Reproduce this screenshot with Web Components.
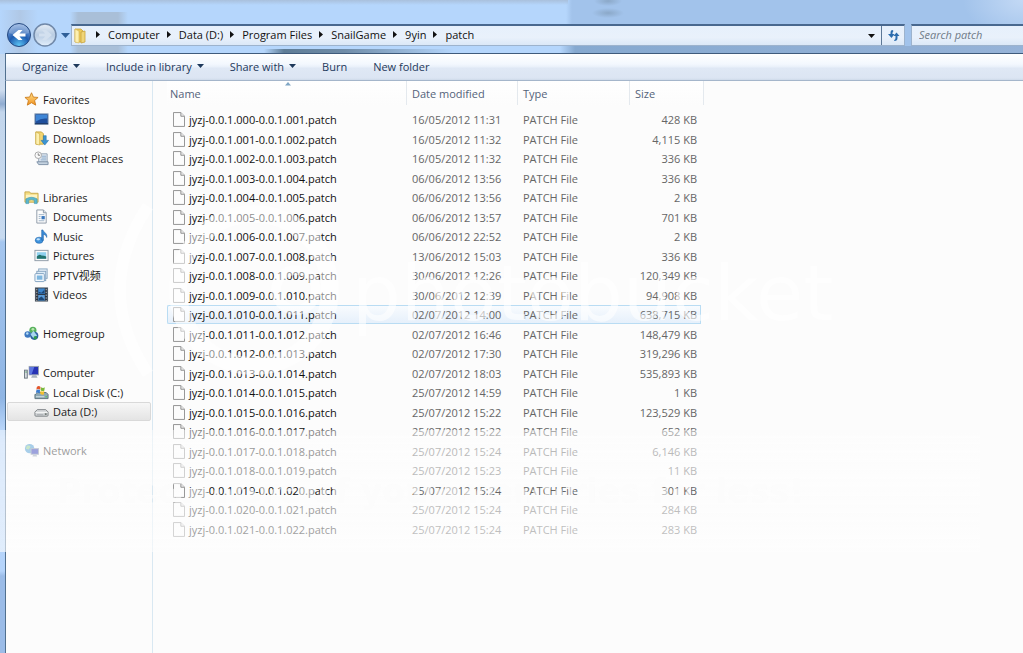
<!DOCTYPE html>
<html lang="en">
<head>
<meta charset="utf-8">
<title>patch</title>
<style>
html, body { height: 100%; }
body { margin: 0; overflow: hidden; font: 11px/19px "Open Sans", "Noto Sans", "Noto Sans CJK SC", sans-serif; color: #1b1b1b; }
</style>
</head>
<body>
<explorer-window>
  <address-bar slot="address" path="Computer|Data (D:)|Program Files|SnailGame|9yin|patch"></address-bar>
  <command-bar slot="commands">
    <command-button menu>Organize</command-button>
    <command-button menu>Include in library</command-button>
    <command-button menu>Share with</command-button>
    <command-button>Burn</command-button>
    <command-button>New folder</command-button>
  </command-bar>
  <nav-pane slot="nav">
    <nav-item icon="star" root>Favorites</nav-item>
    <nav-item icon="desktop">Desktop</nav-item>
    <nav-item icon="downloads">Downloads</nav-item>
    <nav-item icon="recent">Recent Places</nav-item>
    <nav-gap></nav-gap>
    <nav-item icon="libraries" root>Libraries</nav-item>
    <nav-item icon="documents">Documents</nav-item>
    <nav-item icon="music">Music</nav-item>
    <nav-item icon="pictures">Pictures</nav-item>
    <nav-item icon="pptv">PPTV视频</nav-item>
    <nav-item icon="videos">Videos</nav-item>
    <nav-gap></nav-gap>
    <nav-item icon="homegroup" root>Homegroup</nav-item>
    <nav-gap></nav-gap>
    <nav-item icon="computer" root>Computer</nav-item>
    <nav-item icon="localdisk">Local Disk (C:)</nav-item>
    <nav-item icon="drive" selected>Data (D:)</nav-item>
    <nav-gap></nav-gap>
    <nav-item icon="network" root>Network</nav-item>
  </nav-pane>
  <file-list slot="files"></file-list>
</explorer-window>
<photo-watermark></photo-watermark>

<script>
const ICONS = {
  star: '<defs><linearGradient id="g" x2="0" y2="1"><stop stop-color="#ffe28a"/><stop offset="1" stop-color="#f2911f"/></linearGradient></defs><path d="M8 .8l2 4.600 5 .4-3.700 3.300 1.200 4.900L8 11.400 3.500 14l1.200-4.900L1 5.800l5-.4z" fill="url(#g)" stroke="#c9791a" stroke-width=".9"/>',
  desktop: '<rect x="1" y="2" width="14" height="11" fill="#1f4f9c" stroke="#7d93ad"/><path d="M2 3h12v4Q8 6 2 10z" fill="#3f86d6"/><path d="M1 12.500h14" stroke="#16305c"/>',
  downloads: '<path d="M2 1h6l2 2v11H2z" fill="#f3d774" stroke="#c8a63e"/><path d="M2 1l4 2v12l-4-1z" fill="#fdf0b0" stroke="#c8a63e" stroke-width=".6"/><path d="M10 5h3v5h2.500L11.500 15 7.500 10H10z" fill="#3b94d2" stroke="#2471a8" stroke-width=".6"/>',
  recent: '<path d="M5 3h9v9H5z" fill="#e6edf4" stroke="#8fa0b3"/><path d="M3 11.500h12v3H5z" fill="#c5d3e0" stroke="#7c8fa5"/><path d="M8 5.500h5M8 7.500h5M7 9.500h6" stroke="#7fa0c4"/><circle cx="4.500" cy="4.500" r="3.500" fill="#fbfbfb" stroke="#a5a5a5"/><path d="M4.500 2.500v2h2" stroke="#777" fill="none"/>',
  libraries: '<path d="M1 2h5l1 1.500h8V13H1z" fill="#f3dc82" stroke="#c9a94a"/><path d="M2 5h12v4H2z" fill="#fdf3c0"/><path d="M2 14.500V9.500Q8 6 14 9.500v5h-3V11Q8 9.500 5 11v3.500z" fill="#59b7cf" stroke="#3a93ab" stroke-width=".6"/>',
  documents: '<path d="M3 1h7l3 3v11H3z" fill="#fcfcfc" stroke="#8d99a6"/><path d="M10 1v3h3" fill="#dce4ec" stroke="#8d99a6"/><path d="M5 6h6M5 8h2M5 10h2M5 12.500h6" stroke="#9fb3c8"/><path d="M8 7.500h3.500v3.500H8z" fill="#3c78bd"/>',
  music: '<ellipse cx="5.500" cy="12" rx="4.200" ry="3.300" fill="#3f93dd" stroke="#1e62a8" stroke-width=".6"/><path d="M8.200 12V1h1.300c1 3 5 3.500 4 8-.5-2-1.500-3-3.500-3.200V12z" fill="#3a8ad6" stroke="#1e62a8" stroke-width=".6"/><ellipse cx="4.500" cy="11" rx="1.900" ry="1.200" fill="#bfe0fa"/>',
  pictures: '<rect x="1" y="2.500" width="14" height="11" fill="#fafafa" stroke="#8e9aa7"/><rect x="3" y="4.500" width="10" height="7" fill="#8fd0ee"/><path d="M3 9q3-3 5-1 3 0 5 1v2.500H3z" fill="#22736e"/>',
  pptv: '<rect x="5" y="1" width="9" height="10" fill="#e8f1f9" stroke="#86a4c0"/><rect x="3" y="3.500" width="9.500" height="10" fill="#dcebf7" stroke="#86a4c0"/><rect x="1" y="6" width="10" height="8.500" rx="1" fill="#f4f9fd" stroke="#7d9fbf"/><rect x="3" y="8" width="6" height="4.500" fill="#7db6df"/>',
  videos: '<rect x="1.500" y="1" width="13" height="14" fill="#2b3440" stroke="#49535e"/><rect x="4.500" y="1.500" width="7" height="6" fill="#3e86cc"/><rect x="4.500" y="8.500" width="7" height="6" fill="#5a9bd8"/><path d="M5 5l3 1 3-3v4H5zM5 12l3-2 3 3v1H5z" fill="#1d4776"/><path d="M3 2v13M13 2v13" stroke="#c9c9c9" stroke-dasharray="1.500 1.500"/>',
  homegroup: '<circle cx="9.500" cy="4.500" r="3.800" fill="#58b15d"/><circle cx="4" cy="9" r="3.500" fill="#3d78c0"/><circle cx="11" cy="10.500" r="4.300" fill="#2d5f9f"/><path d="M7 9l3-4 4 5-4 3z" fill="#a7d7ee"/><circle cx="9.500" cy="3.500" r="1.500" fill="#b9e6b0"/><circle cx="12" cy="12.500" r="1.800" fill="#2f9a4c"/><circle cx="3.500" cy="8" r="1.300" fill="#b7dcf5"/>',
  computer: '<rect x="5.500" y="1.500" width="10" height="9" fill="#2733b5" stroke="#9aa4b0"/><path d="M6 2h5L8 10H6z" fill="#5c75e0"/><path d="M9 11h4l1.500 2.500h-7z" fill="#a9b3be"/><rect x=".5" y="5.500" width="3" height="8.500" fill="#d6dbe0" stroke="#6d7781"/><path d="M1.500 7.500h1.500" stroke="#3e9b52"/>',
  localdisk: '<path d="M2 10l2-2h9l2 2v4.500H1V10z" fill="#8fa9b4" stroke="#5b727c"/><path d="M2 12.500h9" stroke="#d4e2e8"/><circle cx="13" cy="12.500" r=".8" fill="#50d050"/><path d="M3 2q2-2 4 0L6.500 5Q4.500 3.500 2.500 5z" fill="#e4572b"/><path d="M7.500 2.300q2 1.500 4 .2L11 6q-2 1-4-.5z" fill="#7ab83a"/><path d="M2.500 5.500q2-1.300 4 0L6 9Q4 7.500 2 8.500z" fill="#3b7dd0"/><path d="M7 6q2 1.500 4 .5L10.500 10q-2 .8-4-.7z" fill="#f3c02f"/>',
  drive: '<path d="M1 8.500L3.500 6h9L15 8.500v3.500q0 1-1 1H2q-1 0-1-1z" fill="#d5d8da" stroke="#7d8285"/><path d="M1.500 9h13" stroke="#f6f6f6"/><path d="M3 11.500h7" stroke="#9ea3a6"/><rect x="11.500" y="10" width="2" height="1.500" fill="#58615c"/>',
  network: '<circle cx="6" cy="6" r="5" fill="#3f93d0"/><path d="M3 3q3-1 4 1L5 7 2 6zM7 8l3-1-1 3z" fill="#8ccf8d"/><rect x="7.500" y="6" width="8" height="6" fill="#2733b5" stroke="#8490a5"/><path d="M10 12h3l1 2.500h-5z" fill="#98a3b5"/>'
};
const svg = (body, w = 16, h = 16, vb = '0 0 16 16') =>
  `<svg width="${w}" height="${h}" viewBox="${vb}" fill="none" aria-hidden="true">${body}</svg>`;

class Base extends HTMLElement {
  connectedCallback() {
    if (this.shadowRoot) return;
    this.attachShadow({ mode: 'open' }).innerHTML = this.render();
  }
}

customElements.define('explorer-window', class extends Base {
  render() { return `<style>
    :host { display: grid; grid-template-rows: 53px 28px 1fr; min-height: 100vh; box-sizing: border-box; padding-left: 5px;
      background:
        radial-gradient(ellipse at 100% 0, #c3d9f5 0, transparent 60px) no-repeat,
        linear-gradient(#a9c0dc 0, transparent 5px) 0 0 / 568px 6px no-repeat,
        linear-gradient(90deg, transparent, #a9bfd8 8px, #a9bfd8 48px, transparent) 70px 12px / 58px 42px no-repeat,
        linear-gradient(90deg, transparent, #b0c8e6 20px, transparent) 0 10px / 38px 44px no-repeat,
        linear-gradient(90deg, transparent, #5f7d97 20px, #6f8ca8 80px, transparent) 264px 49px / 190px 4px no-repeat,
        radial-gradient(closest-side, #8ba8c8, transparent) 592px 8px / 32px 10px no-repeat,
        radial-gradient(closest-side, #8ba8c8, transparent) 594px -4px / 28px 10px no-repeat,
        linear-gradient(90deg, #b5d6fc 566px, #a2c3eb 572px) 0 0 / 100% 46px no-repeat,
        linear-gradient(90deg, #b5d6fc 560px, #86a9d0 575px, #96b3d8) 0 46px / 100% 8px no-repeat,
        linear-gradient(#c4d8ef 54px, #cfddef 90px, #8fabd0 104px, #c3d6ec 112px, #c7daf0 238px, #a5c6ef 242px, #8fb5e4 398px, #b9d6fa 430px, #b5d4fb 571px, #9bbce8 576px); }
    .top { display: grid; align-items: end; padding-bottom: 7px; min-width: 0; }
    .bar, .body { border-left: 1px solid #51708f; min-width: 0; }
    .bar { border-top: 1px solid #3f5b7c; border-bottom: 1px solid #a5b6cb; display: grid;
      background: linear-gradient(#fff 0, #f3f8fe 10px, #e9f0fa 13px, #dfe8f5 14px, #dce5f3 24px, #cfdaea); }
    .body { display: grid; grid-template-columns: 147px minmax(0, 1fr); background: #fcfcfc; }
  </style>
  <div class="top"><slot name="address"></slot></div>
  <div class="bar"><slot name="commands"></slot></div>
  <div class="body"><slot name="nav"></slot><slot name="files"></slot></div>`; }
});

customElements.define('address-bar', class extends Base {
  render() {
    const arrow = svg('<path d="M0 0l4 3.500L0 7z" fill="#111"/>', 4, 7, '0 0 4 7');
    const crumbs = this.getAttribute('path').split('|')
      .map(t => `<li>${arrow}<a href="#">${t}</a></li>`).join('');
    return `<style>
    :host { display: flex; align-items: center; height: 22px; }
    button { appearance: none; border: 0; background: none; padding: 0; margin: 0; font: inherit; display: grid; place-items: center; }
    .travel { display: flex; align-items: center; box-sizing: border-box; width: 66px; height: 22px; padding-left: 1px; }
    .travel svg { display: block; flex: none; }
    .recent { width: 12px; height: 22px; }
    .field { box-sizing: border-box; height: 22px; background: linear-gradient(#e6f0fc, #e9f1fb 60%, #dbe8f7); border: 1px solid #9db3cd; border-top: 2px solid #48688f; display: flex; align-items: center; }
    .path { flex: 1; min-width: 0; padding-left: 1px; }
    ol { list-style: none; margin: 0 auto 0 0; padding: 0; display: flex; }
    li { display: flex; align-items: center; gap: 8px; padding-left: 7px; white-space: nowrap; line-height: 17px; padding-bottom: 2px; }
    a { color: #111; text-decoration: none; }
    .drop { width: 19px; height: 19px; }
    .refresh { width: 23px; height: 19px; border-left: 1px solid #5c7796; }
    search { display: block; width: 112px; margin-left: 6px; }
    search .field { border-right: 0; }
    input { width: 100%; box-sizing: border-box; border: 0; outline: 0; background: none; padding: 0 0 2px 7px; height: 18px; font: italic 11px/16px "Open Sans", sans-serif; }
    input::placeholder { color: #707b88; opacity: 1; }
  </style>
  <div class="travel">
    <button aria-label="Back">${svg('<defs><radialGradient id="b" cx=".5" cy=".95" r=".9"><stop stop-color="#5cc5f5"/><stop offset=".5" stop-color="#1f5cb0"/><stop offset="1" stop-color="#86a9dc"/></radialGradient></defs><circle cx="13" cy="12" r="11.500" fill="url(#b)" stroke="#274a80"/><path d="M3 10a10 9 0 0 1 20 0q-10 4-20 0z" fill="#fff" opacity=".22"/><path d="M19.500 10.500h-6l3-3.500h-4l-6 5 6 5h4l-3-3.500h6z" fill="#fff"/>', 27, 24, '0 0 27 24')}</button>
    <button aria-label="Forward">${svg('<defs><linearGradient id="f" x2="0" y2="1"><stop stop-color="#e6eef7"/><stop offset=".5" stop-color="#b9cce2"/><stop offset="1" stop-color="#e2effc"/></linearGradient></defs><circle cx="12" cy="12" r="11" fill="url(#f)" stroke="#7088a8" stroke-width="1.500"/><path d="M6 10.500h6L9 7h4l6 5-6 5H9l3-3.500H6z" fill="#d3e0ef"/>', 26, 24, '0 0 26 24')}</button>
    <button class="recent" aria-label="Recent pages">${svg('<path d="M0 0h9L4.500 5z" fill="#2f5f98"/>', 9, 5, '0 0 9 5')}</button>
  </div>
  <div class="field path">
    ${svg('<path d="M2 1h6l2 2v11H2z" fill="#ecc95a" stroke="#c9a440" stroke-width=".8"/><path d="M8 4l4-1v11l-4 1z" fill="#f0d578" stroke="#c9a440" stroke-width=".8"/><path d="M2 1l4 2v12l-4-1z" fill="#fdf0b0" stroke="#d4b452" stroke-width=".6"/>')}
    <ol>${crumbs}</ol>
    <button class="drop" aria-label="Previous locations">${svg('<path d="M0 0h7L3.500 4z" fill="#111"/>', 7, 4, '0 0 7 4')}</button>
    <button class="refresh" aria-label="Refresh">${svg('<path d="M6 2Q4 2 4 5v1H1.500L5 10l3-4H6V5q0-1 1-2zM8 13q3 0 3-3V8h2L10 4.500 7 8h2v2q0 2-1.500 2z" fill="#2b6cae"/>', 15, 15, '0 0 14 15')}</button>
  </div>
  <search><div class="field"><input type="search" placeholder="Search patch" aria-label="Search patch"></div></search>`; }
});

customElements.define('command-bar', class extends Base {
  render() { return `<style>
    :host { display: flex; align-items: center; gap: 26px; padding: 0 0 2px 16px; }
  </style><slot></slot>`; }
});

customElements.define('command-button', class extends Base {
  render() { return `<style>
    :host { display: block; }
    button { appearance: none; border: 0; background: none; padding: 0; font: inherit; color: #1e395b; display: flex; align-items: center; gap: 5px; white-space: nowrap; }
  </style><button><slot></slot>${this.hasAttribute('menu') ? svg('<path d="M0 0h7L3.500 4z" fill="#1e395b"/>', 7, 4, '0 0 7 4') : ''}</button>`; }
});

customElements.define('nav-pane', class extends Base {
  render() { return `<style>
    :host { display: grid; grid-auto-rows: 19px 20px; align-content: start; padding-top: 9px; border-right: 1px solid #d9e8f2; background: #fcfcfc; }
  </style><slot></slot>`; }
});
customElements.define('nav-gap', class extends Base {
  render() { return '<style>:host { display: block; }</style>'; }
});

customElements.define('nav-item', class extends Base {
  render() { return `<style>
    :host { display: block; padding: 0 1px; }
    a { display: flex; align-items: center; gap: 4px; height: 100%; box-sizing: border-box; padding-left: 26px; color: inherit; text-decoration: none; white-space: nowrap; border: 1px solid transparent; border-radius: 2px; }
    :host([root]) a { padding-left: 16px; }
    svg { width: 15px; height: 15px; flex: none; }
    :host([selected]) a { border-color: #d9d9d9; background: linear-gradient(#f7f7f7, #e4e4e4); }
  </style><a href="#">${svg(ICONS[this.getAttribute('icon')])}<span><slot></slot></span></a>`; }
});

const FILES = [
  ['16/05/2012 11:31', '428'], ['16/05/2012 11:32', '4,115'], ['16/05/2012 11:32', '336'],
  ['06/06/2012 13:56', '336'], ['06/06/2012 13:56', '2'], ['06/06/2012 13:57', '701'],
  ['06/06/2012 22:52', '2'], ['13/06/2012 15:03', '336'], ['30/06/2012 12:26', '120,349'],
  ['30/06/2012 12:39', '94,908'], ['02/07/2012 14:00', '638,715'], ['02/07/2012 16:46', '148,479'],
  ['02/07/2012 17:30', '319,296'], ['02/07/2012 18:03', '535,893'], ['25/07/2012 14:59', '1'],
  ['25/07/2012 15:22', '123,529'], ['25/07/2012 15:22', '652'], ['25/07/2012 15:24', '6,146'],
  ['25/07/2012 15:23', '11'], ['25/07/2012 15:24', '301'], ['25/07/2012 15:24', '284'],
  ['25/07/2012 15:24', '283']
];

customElements.define('file-list', class extends Base {
  render() {
    const n = i => String(i).padStart(3, '0');
    const page = svg('<path d="M.5.500h8l4 4v11H.5z" fill="#fcfcfc" stroke="#8c8c8c"/><path d="M8.500.500v4h4" stroke="#8c8c8c" fill="#e9e9e9"/>', 12, 15, '0 0 13 16');
    const rows = FILES.map(([date, kb], i) => `<tr${i === 10 ? ' class="hot"' : ''}>
      <td><span class="name">${page}<span>jyzj-0.0.1.${n(i)}-0.0.1.${n(i + 1)}.patch</span></span></td>
      <td>${date}</td><td>PATCH File</td><td>${kb} KB</td></tr>`).join('');
    return `<style>
    :host { display: block; padding-left: 14px; }
    table { border-collapse: separate; border-spacing: 0; table-layout: fixed; width: 537px; }
    th, td { padding: 0 0 0 5px; text-align: left; font-weight: 400; white-space: nowrap; box-sizing: border-box; line-height: 17px; }
    th { height: 24px; color: #54637a; border-right: 1px solid #e4e9ee; background: linear-gradient(#fff, #fcfcfc); }
    th:first-child { padding-left: 3px; }
    th:first-child button { width: 100%; display: grid; grid-template-columns: 1fr 12px 1fr; }
    th:nth-child(4) { border-right: 0; }
    th:last-child { padding: 0; }
    th button { appearance: none; border: 0; background: none; padding: 0; font: inherit; color: inherit; display: flex; text-align: left; height: 24px; align-items: center; }
    th svg { align-self: start; margin-top: 1px; }
    tbody::before { content: ""; display: table-row; height: 5px; }
    tbody tr { height: 19px; }
    tbody tr:nth-child(even) { height: 20px; }
    td { color: #666; border: solid transparent; border-width: 1px 0; }
    td:nth-child(4) { text-align: right; padding-right: 4px; }
    td:first-child { color: #111; border-left-width: 1px; }
    .name { display: flex; align-items: center; gap: 4px; }
    .name svg { flex: none; }
    .hot td { border-color: #b9dcf3; background: linear-gradient(#f8fbfe, #e6f0fb); }
    .hot td:first-child { border-radius: 2px 0 0 2px; }
    .hot td:nth-child(4) { border-right: 1px solid #b9dcf3; padding-right: 3px; }
  </style>
  <table>
    <colgroup><col style="width:240px"><col style="width:111px"><col style="width:112px"><col style="width:71px"><col style="width:3px"></colgroup>
    <thead><tr>
      <th><button>Name${svg('<path d="M0 3.500L3 0l3 3.500z" fill="#7fa6c4"/>', 12, 4, '0 0 6 4')}</button></th>
      <th><button>Date modified</button></th><th><button>Type</button></th><th><button>Size</button></th><th></th>
    </tr></thead>
    <tbody>${rows}</tbody>
  </table>`; }
});

customElements.define('photo-watermark', class extends Base {
  render() { return `<style>
    :host { position: absolute; inset: 0 auto auto 0; pointer-events: none; }
    svg { display: block; }
    text { font-family: "DejaVu Sans", sans-serif; }
  </style>
  <svg width="980" height="552" viewBox="0 0 980 552" aria-hidden="true">
    <defs>
      <mask id="m"><rect width="980" height="552" fill="#fff"/><text x="57" y="503" font-size="33" font-weight="700" fill="#000">Protect more of your memories for less!</text></mask>
      <mask id="n"><text x="352" y="320" font-size="77" fill="#fff">photobucket</text></mask>
      <linearGradient id="w" x2="0" y2="1"><stop stop-color="#fdfdfd" stop-opacity=".45"/><stop offset=".1" stop-color="#fdfdfd" stop-opacity=".55"/><stop offset="1" stop-color="#fdfdfd" stop-opacity=".6"/></linearGradient>
    </defs>
    <rect y="430" width="980" height="122" fill="url(#w)" mask="url(#m)"/>
    <g fill="none" stroke="#fff" stroke-opacity=".5">
      <circle cx="254" cy="290" r="76" stroke-width="18"/>
      <circle cx="296" cy="290" r="20" stroke-width="10"/>
      <path d="M148 206Q92 290 148 374" stroke-width="12"/>
    </g>
    <rect x="340" y="240" width="520" height="110" fill="#fff" fill-opacity=".6" mask="url(#n)"/>
  </svg>`; }
});
</script>
</body>
</html>
